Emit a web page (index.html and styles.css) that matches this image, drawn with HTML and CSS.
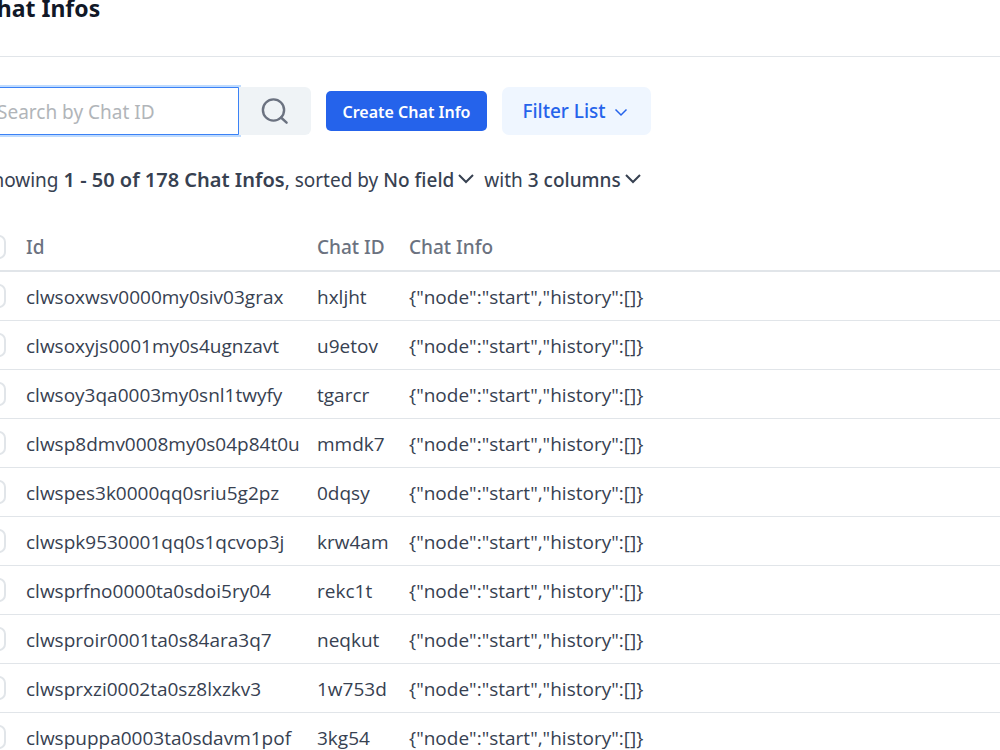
FILE: index.html
```html
<!DOCTYPE html>
<html lang="en">
<head>
    <meta charset="UTF-8">
    <meta name="viewport" content="width=device-width, initial-scale=1.0">
    <title>Chat Infos</title>
    <link rel="stylesheet" href="styles.css">
</head>
<body>
    <main class="page">
        <header class="page-header">
            <h1>Chat Infos</h1>
        </header>

        <form class="toolbar" onsubmit="return false">
            <div class="search">
                <input type="text" class="search-input" placeholder="Search by Chat ID" aria-label="Search by Chat ID">
                <button type="submit" class="search-button" aria-label="Search">
                    <svg width="32" height="32" viewBox="0 0 32 32" fill="none" stroke="currentColor" stroke-width="2.4" stroke-linecap="round">
                        <circle cx="14.500" cy="15" r="10.600"/>
                        <path d="M22 22.500l5.600 5.200"/>
                    </svg>
                </button>
            </div>
            <button type="button" class="create-button">Create Chat Info</button>
            <button type="button" class="filter-button">
                Filter List
                <svg width="14" height="14" viewBox="0 0 14 14" fill="none" stroke="currentColor" stroke-width="1.5"><path d="M1.500 5.500L7 11l5.500-5.500"/></svg>
            </button>
        </form>

        <div class="summary">
            <span>Showing <strong>1 - 50 of 178 Chat Infos</strong>, sorted by</span>
            <button type="button" class="summary-button">
                No field
                <svg width="16" height="16" viewBox="0 0 16 16" fill="none" stroke="currentColor" stroke-width="2"><path d="M1 3l7 7 7-7"/></svg>
            </button>
            <span class="with">with</span>
            <button type="button" class="summary-button">
                3 columns
                <svg width="16" height="16" viewBox="0 0 16 16" fill="none" stroke="currentColor" stroke-width="2"><path d="M1 3l7 7 7-7"/></svg>
            </button>
        </div>

        <table class="list">
            <colgroup>
                <col class="col-check">
                <col class="col-id">
                <col class="col-chat">
                <col>
            </colgroup>
            <thead>
                <tr><th><input type="checkbox" aria-label="Select all"></th><th>Id</th><th>Chat ID</th><th>Chat Info</th></tr>
            </thead>
            <tbody>
                <tr><td><input type="checkbox" aria-label="Select hxljht"></td><td>clwsoxwsv0000my0siv03grax</td><td>hxljht</td><td>{"node":"start","history":[]}</td></tr>
                <tr><td><input type="checkbox" aria-label="Select u9etov"></td><td>clwsoxyjs0001my0s4ugnzavt</td><td>u9etov</td><td>{"node":"start","history":[]}</td></tr>
                <tr><td><input type="checkbox" aria-label="Select tgarcr"></td><td>clwsoy3qa0003my0snl1twyfy</td><td>tgarcr</td><td>{"node":"start","history":[]}</td></tr>
                <tr><td><input type="checkbox" aria-label="Select mmdk7"></td><td>clwsp8dmv0008my0s04p84t0u</td><td>mmdk7</td><td>{"node":"start","history":[]}</td></tr>
                <tr><td><input type="checkbox" aria-label="Select 0dqsy"></td><td>clwspes3k0000qq0sriu5g2pz</td><td>0dqsy</td><td>{"node":"start","history":[]}</td></tr>
                <tr><td><input type="checkbox" aria-label="Select krw4am"></td><td>clwspk9530001qq0s1qcvop3j</td><td>krw4am</td><td>{"node":"start","history":[]}</td></tr>
                <tr><td><input type="checkbox" aria-label="Select rekc1t"></td><td>clwsprfno0000ta0sdoi5ry04</td><td>rekc1t</td><td>{"node":"start","history":[]}</td></tr>
                <tr><td><input type="checkbox" aria-label="Select neqkut"></td><td>clwsproir0001ta0s84ara3q7</td><td>neqkut</td><td>{"node":"start","history":[]}</td></tr>
                <tr><td><input type="checkbox" aria-label="Select 1w753d"></td><td>clwsprxzi0002ta0sz8lxzkv3</td><td>1w753d</td><td>{"node":"start","history":[]}</td></tr>
                <tr><td><input type="checkbox" aria-label="Select 3kg54"></td><td>clwspuppa0003ta0sdavm1pof</td><td>3kg54</td><td>{"node":"start","history":[]}</td></tr>
            </tbody>
        </table>
    </main>
</body>
</html>
```
FILE: styles.css
```css
* {
    box-sizing: border-box;
}

html {
    height: 100%;
    overflow: hidden;
}

body {
    margin: 0;
    height: 100%;
    overflow: hidden;
    background: #fff;
    color: #374151;
    font-family: "Noto Sans", "Open Sans", sans-serif;
    font-size: 19px;
    line-height: 28px;
}

button, input {
    margin: 0;
    font: inherit;
}

button {
    border: none;
    padding: 0;
    cursor: pointer;
}

svg {
    flex: none;
}

.page {
    margin: -8px 0 0 -18px;
}

.page-header {
    padding-bottom: 32px;
    border-bottom: 1px solid #e1e5e9;
}

h1 {
    margin: 0;
    color: #111827;
    font-size: 23px;
    font-weight: 700;
    line-height: 32px;
}

.toolbar {
    display: flex;
    align-items: center;
    gap: 15px;
    margin-top: 30px;
}

.search {
    display: flex;
}

.search-input {
    width: 257px;
    height: 48px;
    padding: 2px 14px 0;
    border: 1px solid #3b82f6;
    border-radius: 6px 0 0 6px;
    outline: none;
    background: #fff;
    box-shadow: 0 0 0 2px #bfdbfe;
    color: #374151;
}

.search-input::placeholder {
    color: #b1b5b9;
    opacity: 1;
}

.search-button {
    position: relative;
    display: flex;
    align-items: center;
    justify-content: center;
    width: 72px;
    height: 48px;
    border-radius: 0 6px 6px 0;
    background: #eff3f6;
    color: #6b7280;
}

.create-button {
    width: 161px;
    height: 40px;
    padding-top: 2px;
    border-radius: 5px;
    background: #2563eb;
    color: #fff;
    font-size: 16px;
    font-weight: 600;
}

.filter-button {
    display: flex;
    align-items: center;
    justify-content: center;
    gap: 8px;
    width: 149px;
    height: 48px;
    padding-right: 3px;
    border-radius: 7px;
    background: #eff6ff;
    color: #2563eb;
    font-weight: 500;
}

.summary {
    display: flex;
    align-items: center;
    gap: 5px;
    margin-top: 31px;
}

.summary strong {
    font-size: 20px;
    font-weight: 600;
}

.summary-button {
    display: flex;
    align-items: center;
    gap: 4px;
    background: none;
    color: #374151;
    font-weight: 500;
}

.with {
    margin-left: 5px;
}

.list {
    width: 100%;
    margin-top: 29px;
    border-collapse: separate;
    border-spacing: 0;
    table-layout: fixed;
}

.col-check {
    width: 34px;
}

.col-id {
    width: 291px;
}

.col-chat {
    width: 92px;
}

.list th,
.list td {
    height: 49px;
    padding: 0 10px;
    border-bottom: 1px solid #e1e5e9;
    text-align: left;
    white-space: nowrap;
}

.list td {
    padding-top: 2px;
    font-family: "Open Sans", "Noto Sans", sans-serif;
}

.list th {
    border-bottom-width: 2px;
    color: #6b7280;
    font-weight: 500;
}

.list th:first-child,
.list td:first-child {
    padding: 0;
}

.list input {
    display: block;
    appearance: none;
    width: 24px;
    height: 24px;
    border: 2px solid #e1e5e9;
    border-radius: 7px;
    background: #fff;
}
```
